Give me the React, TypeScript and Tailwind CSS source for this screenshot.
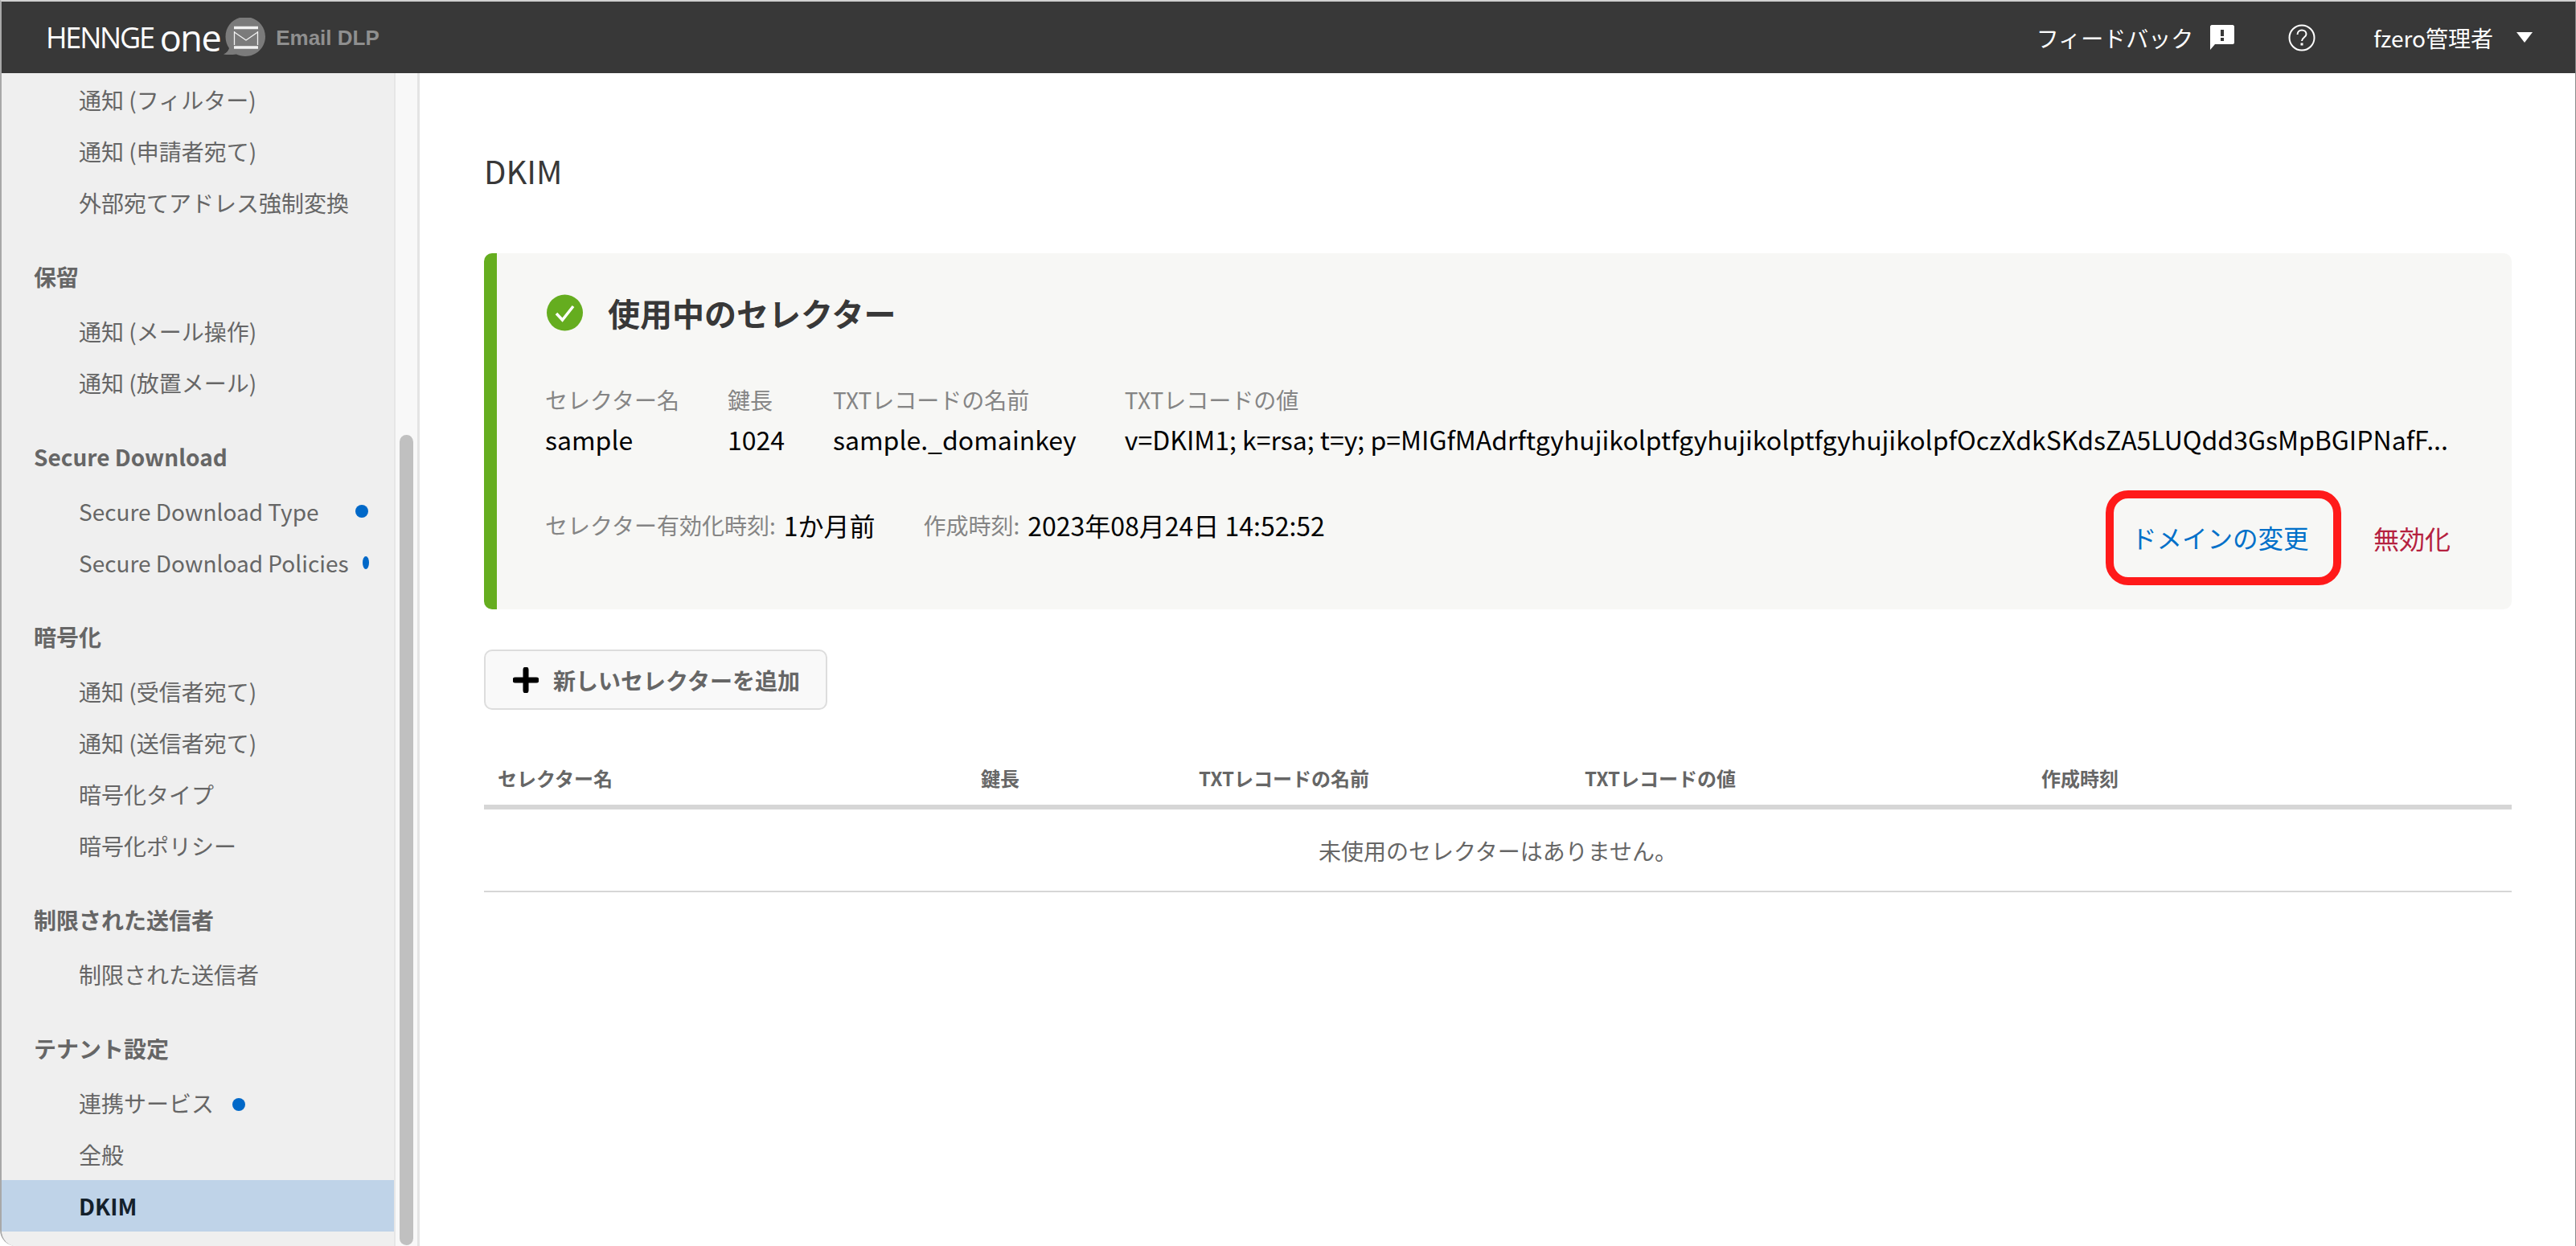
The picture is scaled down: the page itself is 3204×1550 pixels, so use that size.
const sections = [
  {
    title: "",
    items: [{ label: "通知 (フィルター)" }, { label: "通知 (申請者宛て)" }, { label: "外部宛てアドレス強制変換" }],
  },
  {
    title: "保留",
    items: [{ label: "通知 (メール操作)" }, { label: "通知 (放置メール)" }],
  },
  {
    title: "Secure Download",
    items: [
      { label: "Secure Download Type", dot: "ml-[45px] w-4" },
      { label: "Secure Download Policies", dot: "ml-[17px] w-2" },
    ],
  },
  {
    title: "暗号化",
    items: [
      { label: "通知 (受信者宛て)" },
      { label: "通知 (送信者宛て)" },
      { label: "暗号化タイプ" },
      { label: "暗号化ポリシー" },
    ],
  },
  {
    title: "制限された送信者",
    items: [{ label: "制限された送信者" }],
  },
  {
    title: "テナント設定",
    items: [
      { label: "連携サービス", dot: "ml-[23px] mt-1 w-4" },
      { label: "全般" },
      { label: "DKIM", active: true },
    ],
  },
];

const columns = [
  { label: "セレクター名", width: "w-[601px]" },
  { label: "鍵長", width: "w-[271px]" },
  { label: "TXTレコードの名前", width: "w-[480px]" },
  { label: "TXTレコードの値", width: "w-[568px]" },
  { label: "作成時刻", width: "" },
];

function Logo() {
  return (
    <div className="flex items-center">
      <span className="font-['Open_Sans'] text-[36px] font-normal leading-none tracking-[-2.2px] text-white">HENNGE</span>
      <span className="ml-[8px] font-['Open_Sans'] text-[45px] font-normal leading-none tracking-[-1.5px] text-white">one</span>
      <svg className="ml-[4px]" width="52" height="50" viewBox="0 0 52 50">
        <path d="M27 -1C41 -1 52 10 52 23.500C52 37 41 48 27 48C23 48 19 47 16 45.500C11 46 5 46.500 0 45.500C4 44 6 41 7 38C4 34 2.500 29 2.500 23.500C2.500 10 13 -1 27 -1Z" fill="#7b7b7b" />
        <path d="M13 12.500H43M13 37H43" stroke="#f2f2f2" strokeWidth="3.500" />
        <path d="M13.500 17V34M42.500 17V34M13.500 18L28 28L42.500 18" stroke="#f2f2f2" strokeWidth="1.300" fill="none" />
      </svg>
      <span className="ml-[13px] font-['Liberation_Sans'] text-[26px] font-bold leading-none text-[#8f8f8f]">Email DLP</span>
    </div>
  );
}

function Header() {
  return (
    <header className="flex h-[89px] shrink-0 items-center justify-between bg-[#383838] pl-[55px] pr-[53px] text-white">
      <Logo />
      <div className="flex items-center text-[28px]">
        <span>フィードバック</span>
        <svg className="ml-[21px]" width="30" height="31" viewBox="0 0 30 31">
          <path d="M2 0H28C29 0 30 1 30 2V22C30 23 29 24 28 24H6L0 31V2C0 1 1 0 2 0Z" fill="#fff" />
          <rect x="13" y="6" width="4" height="8" fill="#383838" />
          <rect x="13" y="16" width="4" height="4" fill="#383838" />
        </svg>
        <svg className="ml-[67px]" width="34" height="34" viewBox="0 0 34 34">
          <circle cx="17" cy="17" r="15.500" fill="none" stroke="#fff" strokeWidth="2" />
          <path d="M11.500 13C11.500 9.500 14 7.500 17 7.500C20 7.500 22.500 9.500 22.500 12.500C22.500 16.500 17 16.500 17 21" fill="none" stroke="#fff" strokeWidth="2" />
          <rect x="15.500" y="23.500" width="3" height="3" fill="#fff" />
        </svg>
        <span className="ml-[72px]">fzero管理者</span>
        <svg className="ml-[29px]" width="20" height="13" viewBox="0 0 20 13">
          <path d="M0 0H20L10 13Z" fill="#fff" />
        </svg>
      </div>
    </header>
  );
}

function Sidebar() {
  return (
    <aside className="flex w-[520px] shrink-0 overflow-hidden rounded-bl-[18px] border-r-[3px] border-[#e4e4e4]">
      <nav className="w-[490px] border-r-2 border-[#e6e6e6] bg-[#efefef] pt-[1px] text-[28px] text-[#666666]">
        {sections.map((section) => (
          <div key={section.title || "top"}>
            {section.title && (
              <div className="mb-[4px] mt-[28px] flex h-[64px] items-center pl-[40px] font-bold">{section.title}</div>
            )}
            {section.items.map((item) => (
              <div
                key={item.label}
                className={
                  item.active
                    ? "flex h-[64px] items-center bg-[#bfd3e8] pl-[96px] font-bold text-[#14202b]"
                    : "flex h-[64px] items-center pl-[96px]"
                }
              >
                <span className="whitespace-nowrap">{item.label}</span>
                {item.dot && <span className={`h-4 shrink-0 rounded-[50%] bg-[#0068c8] ${item.dot}`} />}
              </div>
            ))}
          </div>
        ))}
      </nav>
      <div className="flex flex-1 flex-col justify-end bg-[#f8f8f8] px-[5px] pb-px">
        <div className="h-[1008px] w-[17px] rounded-full bg-[#c0c0c0]" />
      </div>
    </aside>
  );
}

function ActiveSelector() {
  return (
    <section className="flex h-[443px] flex-col rounded-[10px] border-l-[16px] border-[#65ad1f] bg-[#f7f7f5] pl-[60px] pt-[50px]">
      <div className="flex h-[48px] items-center">
        <svg className="ml-[2px]" width="45" height="46" viewBox="0 0 45 46">
          <circle cx="22.500" cy="23" r="22.500" fill="#65ad1f" />
          <path d="M12 24L19.500 32L33 15" fill="none" stroke="#fff" strokeWidth="3.500" />
        </svg>
        <h2 className="ml-[31px] text-[40px] font-bold text-[#383838]">使用中のセレクター</h2>
      </div>
      <div className="mt-[62px] flex gap-[60px] text-[32px] text-black">
        <div className="shrink-0">
          <div className="text-[28px] leading-[44px] text-[#858585]">セレクター名</div>
          <div className="mt-[2px] leading-[50px]">sample</div>
        </div>
        <div className="shrink-0">
          <div className="text-[28px] leading-[44px] text-[#858585]">鍵長</div>
          <div className="mt-[2px] leading-[50px]">1024</div>
        </div>
        <div className="shrink-0">
          <div className="text-[28px] leading-[44px] text-[#858585]">TXTレコードの名前</div>
          <div className="mt-[2px] leading-[50px]">sample._domainkey</div>
        </div>
        <div className="min-w-0 flex-1">
          <div className="text-[28px] leading-[44px] text-[#858585]">TXTレコードの値</div>
          <div className="mt-[2px] whitespace-nowrap leading-[50px]">
            v=DKIM1; k=rsa; t=y; p=MIGfMAdrftgyhujikolptfgyhujikolptfgyhujikolpfOczXdkSKdsZA5LUQdd3GsMpBGIPNafF...
          </div>
        </div>
      </div>
      <div className="flex items-start justify-between pr-[76px]">
        <div className="mt-[57px] flex items-center text-[32px] leading-[50px] text-black">
          <span className="text-[28px] text-[#858585]">セレクター有効化時刻:</span>
          <span className="ml-[10px]">1か月前</span>
          <span className="ml-[60px] text-[28px] text-[#858585]">作成時刻:</span>
          <span className="ml-[10px]">2023年08月24日 14:52:52</span>
        </div>
        <div className="mt-[39px] flex items-center text-[32px]">
          <div className="flex h-[118px] w-[293px] items-center rounded-[28px] border-[10px] border-[#ff1a1a] pl-[22px] text-[31.5px] text-[#0070c9]">
            ドメインの変更
          </div>
          <span className="ml-[40px] text-[#b5213f]">無効化</span>
        </div>
      </div>
    </section>
  );
}

function SelectorTable() {
  return (
    <div className="mt-[50px]">
      <button className="flex h-[75px] w-[427px] items-center rounded-[10px] border-2 border-[#dddddd] bg-[#f9f9f9] pl-[34px] text-[28px] font-bold text-[#666666]">
        <svg width="32" height="32" viewBox="0 0 32 32">
          <path d="M16 3V29M3 16H29" stroke="#000" strokeWidth="7" strokeLinecap="round" />
        </svg>
        <span className="ml-[18px]">新しいセレクターを追加</span>
      </button>
      <div className="mt-[52px] flex h-[72px] items-center border-b-[6px] border-[#d6d6d6] pl-[17px] text-[24px] font-bold text-[#666666]">
        {columns.map((col) => (
          <div key={col.label} className={col.width}>
            {col.label}
          </div>
        ))}
      </div>
      <div className="flex h-[103px] items-center justify-center border-b-2 border-[#d6d6d6] text-[28px] text-[#666666]">
        未使用のセレクターはありません。
      </div>
    </div>
  );
}

export default function App() {
  return (
    <div className="flex h-[1550px] w-[3204px] flex-col overflow-hidden rounded-bl-[20px] border-l-2 border-r border-t-2 border-l-[#a8a8a8] border-r-[#8a8a8a] border-t-[#d0d0d0] bg-white font-['Noto_Sans_CJK_JP',sans-serif]">
      <Header />
      <div className="flex min-h-0 flex-1">
        <Sidebar />
        <main className="flex-1 pl-[80px] pr-[79px] pt-[95px]">
          <h1 className="text-[40px] leading-[52px] text-[#383838]">DKIM</h1>
          <div className="mt-[77px]">
            <ActiveSelector />
            <SelectorTable />
          </div>
        </main>
      </div>
    </div>
  );
}
